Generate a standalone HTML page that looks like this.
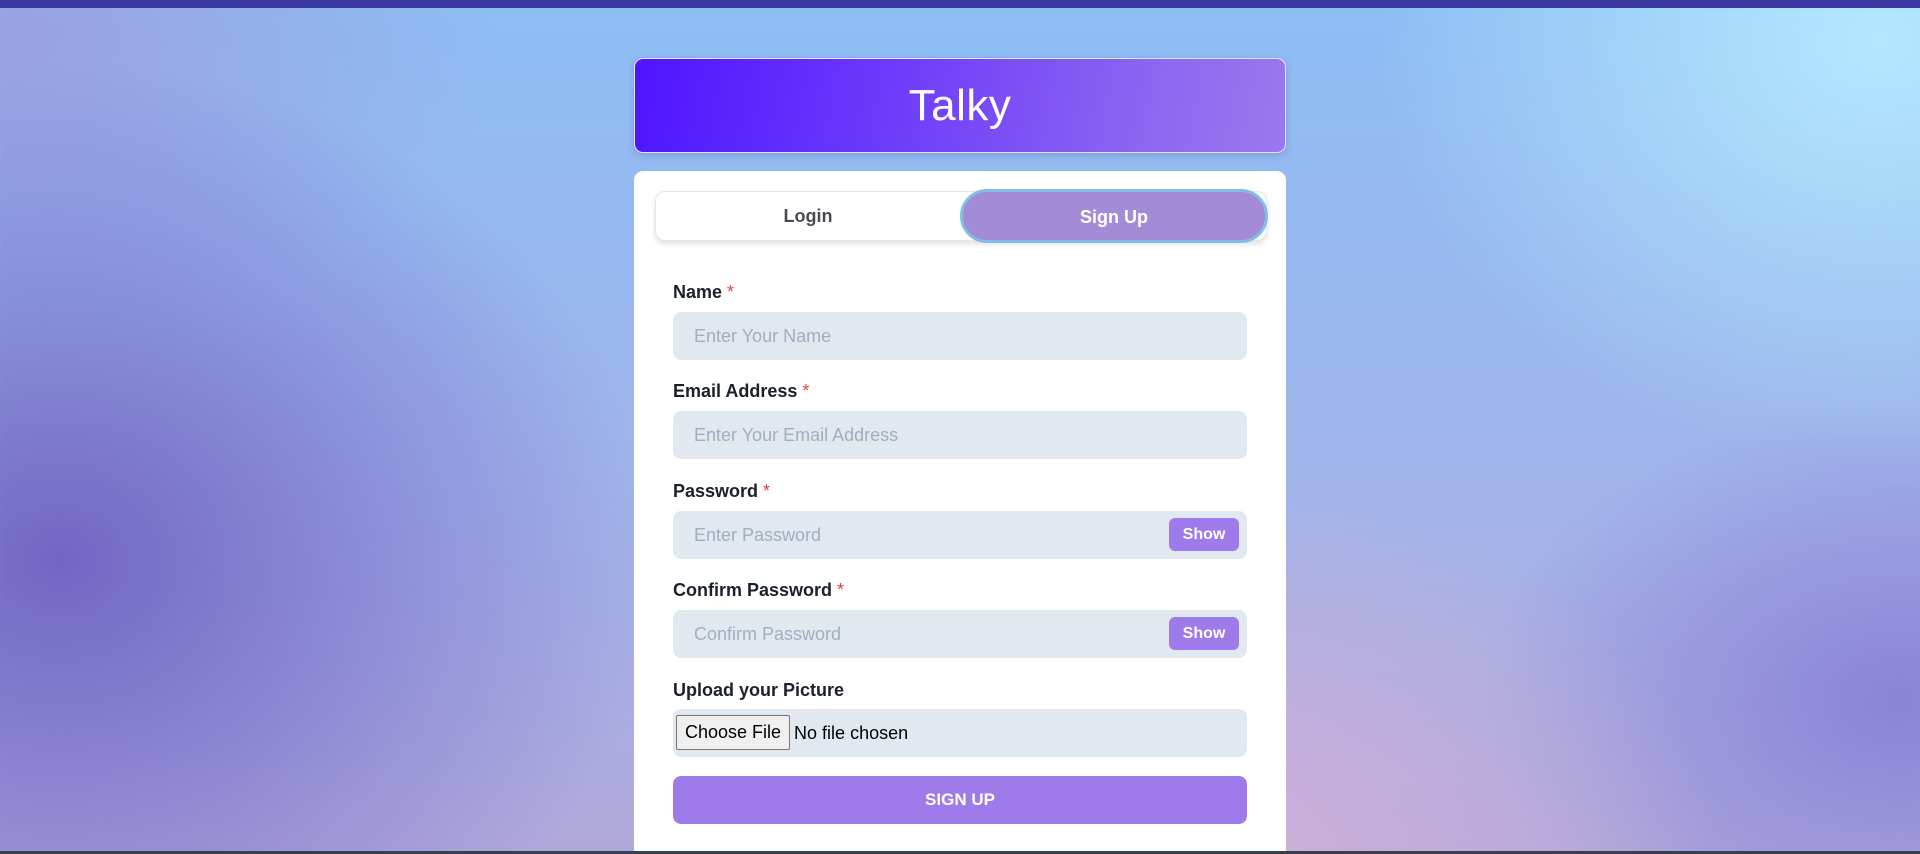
<!DOCTYPE html>
<html><head><meta charset="utf-8"><style>
*{box-sizing:border-box;margin:0;padding:0}
html,body{width:1920px;height:854px;overflow:hidden}
body{font-family:"Liberation Sans","DejaVu Sans",sans-serif;position:relative;
background:
radial-gradient(ellipse 500px 420px at 1880px 40px,#b4e8ff 0%,rgba(180,232,255,0) 100%),
radial-gradient(ellipse 520px 380px at 1200px 860px,#d0b0d8 0%,rgba(208,176,216,0) 100%),
radial-gradient(ellipse 600px 500px at 60px 560px,#7266c4 0%,rgba(114,102,196,0) 100%),
radial-gradient(ellipse 500px 300px at 0px 40px,#9aa0e0 0%,rgba(154,160,224,0) 100%),
radial-gradient(ellipse 420px 300px at 1900px 700px,#8a84d6 0%,rgba(138,132,214,0) 100%),
linear-gradient(180deg,#8cbef4 0%,#a2b4ea 60%,#b0a8dc 100%);}
.top{position:absolute;left:0;top:0;width:1920px;height:8px;background:#3b37a1}
.bot{position:absolute;left:0;top:851px;width:1920px;height:3px;background:#3a3f4c}
.hdr{position:absolute;left:634px;top:58px;width:652px;height:95px;border-radius:9px;border:1px solid #e6e0ff;
background:linear-gradient(100deg,#4f14ff 0%,#6a36fb 35%,#8d68f0 80%,#9b78ee 100%);box-shadow:0 2px 8px rgba(60,60,120,.25);
color:#fff;font-size:44px;font-weight:300;text-align:center;line-height:93px;letter-spacing:.5px}
.card{position:absolute;left:634px;top:171px;width:652px;height:690px;background:#fff;border-radius:9px}
.tabs{position:absolute;left:21px;top:20px;width:612px;height:50px;border-radius:10px;border:1px solid #e2e6ee;box-shadow:0 3px 6px rgba(0,0,0,.12);background:#fff}
.tab{position:absolute;top:0;height:48px;line-height:48px;text-align:center;font-size:18px;font-weight:bold;color:#4a4a55}
.su{left:304px;top:-3px;width:308px;height:54px;line-height:50px;border-radius:27px;background:#a38bd6;border:3px solid #83bde6;color:#fff}
.lbl{position:absolute;left:39px;font-size:18px;font-weight:bold;color:#1a202c}
.lbl span{color:#e53e3e;font-weight:normal}
.inp{position:absolute;left:39px;width:574px;height:48px;border-radius:8px;background:#e2e8f0;font-size:18px;color:#a0aec0;line-height:48px;padding-left:21px}
.show{position:absolute;right:8px;top:7px;width:70px;height:33px;border-radius:6px;background:#9f7aea;color:#fff;font-size:16px;font-weight:bold;line-height:33px;text-align:center;padding:0}
.file{padding-left:3px;color:#000;font-size:18px}
.file b{display:inline-block;font-weight:normal;border:1px solid #767676;background:#efefef;border-radius:2px;height:35px;line-height:33px;padding:0 8px;margin-right:4px;vertical-align:middle;margin-top:-3px}
.btn{position:absolute;left:39px;top:605px;width:574px;height:48px;border-radius:8px;background:#9f7aea;color:#fff;font-weight:bold;font-size:17px;text-align:center;line-height:48px}
</style></head><body>
<div class="top"></div>
<div class="hdr">Talky</div>
<div class="card">
 <div class="tabs"><div class="tab" style="left:0;width:304px">Login</div><div class="tab su">Sign Up</div></div>
 <div class="lbl" style="top:111px">Name <span>*</span></div>
 <div class="inp" style="top:141px">Enter Your Name</div>
 <div class="lbl" style="top:210px">Email Address <span>*</span></div>
 <div class="inp" style="top:240px">Enter Your Email Address</div>
 <div class="lbl" style="top:310px">Password <span>*</span></div>
 <div class="inp" style="top:340px">Enter Password<div class="show">Show</div></div>
 <div class="lbl" style="top:409px">Confirm Password <span>*</span></div>
 <div class="inp" style="top:439px">Confirm Password<div class="show">Show</div></div>
 <div class="lbl" style="top:509px">Upload your Picture</div>
 <div class="inp file" style="top:538px"><b>Choose File</b>No file chosen</div>
 <div class="btn">SIGN UP</div>
</div>
<div class="bot"></div>
</body></html>
